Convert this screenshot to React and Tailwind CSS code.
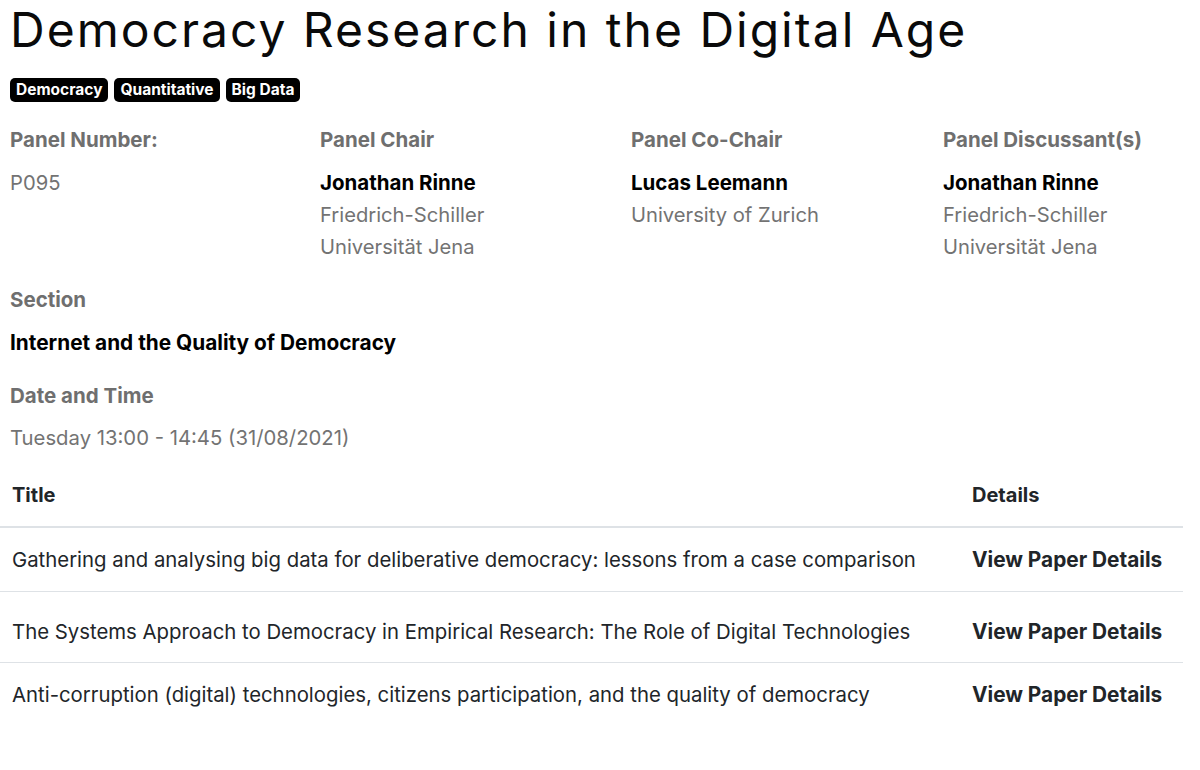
import React from "react";

const people = [
  { label: "Panel Number:", lines: [], plain: "P095" },
  { label: "Panel Chair", name: "Jonathan Rinne", lines: ["Friedrich-Schiller", "Universität Jena"] },
  { label: "Panel Co-Chair", name: "Lucas Leemann", lines: ["University of Zurich"] },
  { label: "Panel Discussant(s)", name: "Jonathan Rinne", lines: ["Friedrich-Schiller", "Universität Jena"] },
];

const papers = [
  { title: "Gathering and analysing big data for deliberative democracy: lessons from a case comparison", cls: "pt-[16px] pb-[15px] border-b border-[#dee2e6]" },
  { title: "The Systems Approach to Democracy in Empirical Research: The Role of Digital Technologies", cls: "pt-[24px] pb-[14px] border-b border-[#dee2e6]" },
  { title: "Anti-corruption (digital) technologies, citizens participation, and the quality of democracy", cls: "pt-[16px] pb-[15px]" },
];

export default function App() {
  return (
    <div className="w-[1200px] h-[770px] overflow-hidden bg-white font-['Inter','Noto_Sans',sans-serif] text-black">
      <h1 className="pl-[10px] text-[48px] leading-[60px] font-normal tracking-[2px] text-[#0a0a0a]">
        Democracy Research in the Digital Age
      </h1>

      <div className="flex gap-[6px] pl-[10px] mt-[18px]">
        {["Democracy", "Quantitative", "Big Data"].map((t) => (
          <span key={t} className="h-[24px] px-[6px] rounded-[5px] bg-black text-white text-[15.5px] font-bold leading-[24px]">
            {t}
          </span>
        ))}
      </div>

      <div className="grid grid-cols-[310px_311px_312px_1fr] pl-[10px] mt-[22px]">
        {people.map((p) => (
          <div key={p.label} className="flex flex-col">
            <div className="text-[20.5px] leading-[32px] font-bold text-[#6f6f6f]">{p.label}</div>
            <div className="mt-[11px] text-[20.2px] leading-[32px]">
              {p.plain ? (
                <div className="text-[#737373]">{p.plain}</div>
              ) : (
                <>
                  <div className="font-bold text-[20.5px] text-black">{p.name}</div>
                  {p.lines.map((l) => (
                    <div key={l} className="text-[#737373]">{l}</div>
                  ))}
                </>
              )}
            </div>
          </div>
        ))}
      </div>

      <div className="pl-[10px] mt-[21px]">
        <div className="text-[20.5px] leading-[32px] font-bold text-[#6f6f6f]">Section</div>
        <div className="mt-[11px] text-[20.8px] leading-[32px] font-bold text-black">Internet and the Quality of Democracy</div>
        <div className="mt-[21px] text-[20.5px] leading-[32px] font-bold text-[#6f6f6f]">Date and Time</div>
        <div className="mt-[10px] text-[20.3px] leading-[32px] text-[#737373]">Tuesday 13:00 - 14:45 (31/08/2021)</div>
      </div>

      <div className="w-[1183px]">
        <div className="grid grid-cols-[972px_1fr] pt-[25px] pb-[15px] border-b-2 border-[#dee2e6] text-[20px] leading-[32px] font-bold text-[#212529]">
          <div className="pl-[12px]">Title</div>
          <div>Details</div>
        </div>
        {papers.map((p) => (
          <div key={p.title} className={`grid grid-cols-[972px_1fr] text-[20.35px] leading-[32px] text-[#212529] ${p.cls}`}>
            <div className="pl-[12px] whitespace-nowrap">{p.title}</div>
            <div className="font-bold text-[20.8px] whitespace-nowrap">View Paper Details</div>
          </div>
        ))}
      </div>
    </div>
  );
}
